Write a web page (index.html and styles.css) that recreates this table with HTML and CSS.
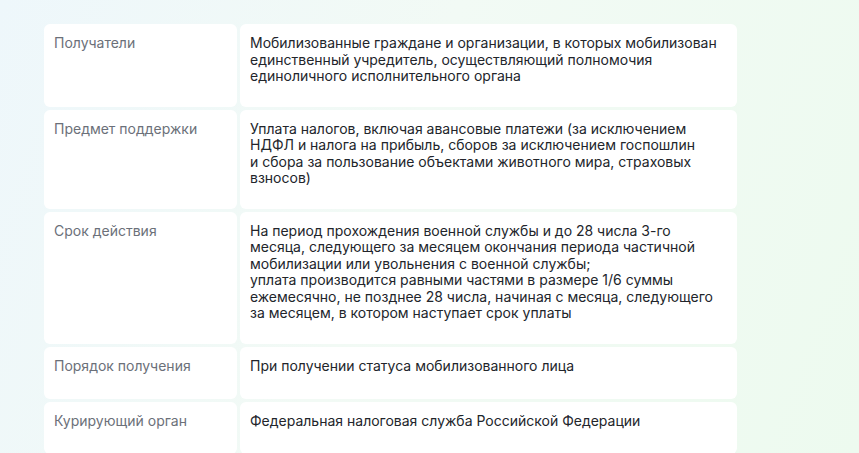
FILE: index.html
```html
<!DOCTYPE html>
<html lang="ru">
<head>
    <meta charset="UTF-8">
    <meta name="viewport" content="width=device-width, initial-scale=1.0">
    <title>Меры поддержки</title>
    <link rel="stylesheet" href="styles.css">
</head>
<body>
    <div class="support-table">
        <!-- Получатели -->
        <div class="cell label">Получатели</div>
        <div class="cell value">Мобилизованные граждане и организации, в которых мобилизован единственный учредитель, осуществляющий полномочия единоличного исполнительного органа</div>

        <!-- Предмет поддержки -->
        <div class="cell label">Предмет поддержки</div>
        <div class="cell value">Уплата налогов, включая авансовые платежи (за исключением НДФЛ и налога на прибыль, сборов за исключением госпошлин и&nbsp;сбора за пользование объектами животного мира, страховых взносов)</div>

        <!-- Срок действия -->
        <div class="cell label">Срок действия</div>
        <div class="cell value">На период прохождения военной службы и до 28 числа 3-го месяца, следующего за месяцем окончания периода частичной мобилизации или увольнения с военной службы;<br>уплата производится равными частями в размере 1/6 суммы ежемесячно, не позднее 28 числа, начиная с месяца, следующего за месяцем, в котором наступает срок уплаты</div>

        <!-- Порядок получения -->
        <div class="cell label short">Порядок получения</div>
        <div class="cell value short">При получении статуса мобилизованного лица</div>

        <!-- Курирующий орган -->
        <div class="cell label short">Курирующий орган</div>
        <div class="cell value short">Федеральная налоговая служба Российской Федерации</div>
    </div>
</body>
</html>
```

FILE: styles.css
```css
body {
    margin: 0;
    min-height: 100vh;
    font-family: Inter, 'Noto Sans', sans-serif;
    background: linear-gradient(110deg, #eef7fb 0%, #f2faf5 45%, #edfaef 100%);
    overflow: hidden;
}

.support-table {
    display: grid;
    grid-template-columns: 193px 497px;
    gap: 3px;
    margin-left: 44px;
    padding-top: 24px;
}

.cell {
    background-color: #fff;
    border-radius: 6px;
    padding: 11px 10px 22px;
    font-size: 14px;
    line-height: 16.5px;
}

.cell.short {
    min-height: 19px;
}

.label {
    color: #6b7079; /* grey caption */
}

.value {
    color: #22252b;
}
```
